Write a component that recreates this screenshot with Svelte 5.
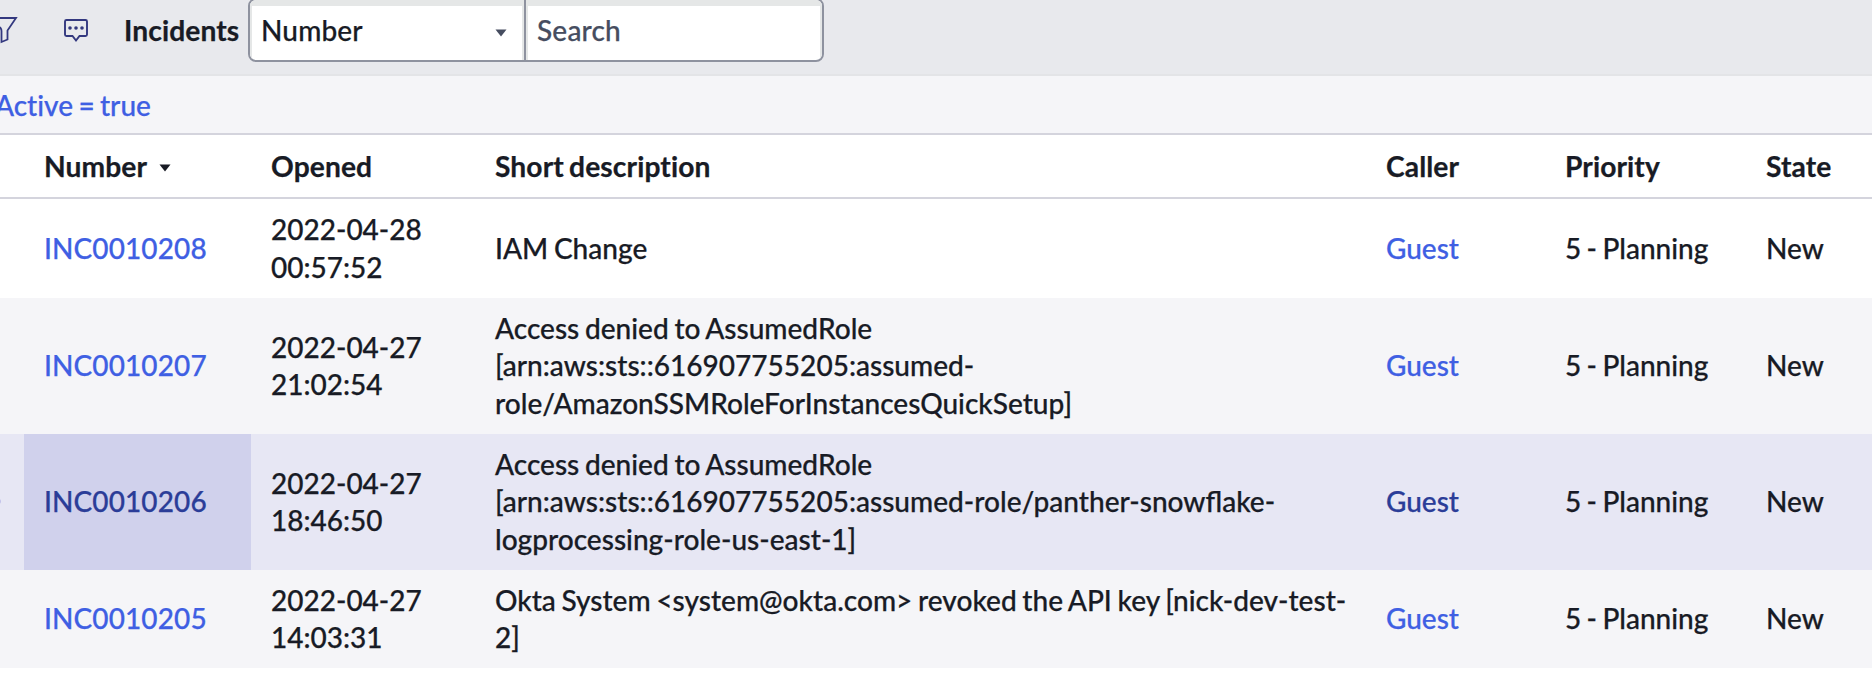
<script>
  const columns = ['Number', 'Opened', 'Short description', 'Caller', 'Priority', 'State'];
  const rows = [
    { number: 'INC0010208', date: '2022-04-28', time: '00:57:52', lines: ['IAM Change'], height: 99 },
    {
      number: 'INC0010207', date: '2022-04-27', time: '21:02:54', height: 136,
      lines: ['Access denied to AssumedRole', '[arn:aws:sts::616907755205:assumed-', 'role/AmazonSSMRoleForInstancesQuickSetup]']
    },
    {
      number: 'INC0010206', date: '2022-04-27', time: '18:46:50', height: 136, active: true,
      lines: ['Access denied to AssumedRole', '[arn:aws:sts::616907755205:assumed-role/panther-snowflake-', 'logprocessing-role-us-east-1]']
    },
    {
      number: 'INC0010205', date: '2022-04-27', time: '14:03:31', height: 98,
      lines: ['Okta System <system@okta.com> revoked the API key [nick-dev-test-', '2]']
    }
  ];
</script>

<div class="page">
  <header class="toolbar">
    <svg class="funnel" width="18" height="30" viewBox="0 0 18 30" fill="none" stroke="#33387f" stroke-width="1.800">
      <path d="M-11 3H16L7.500 15.500V24.500L1.500 27V16Q1.500 14 0 12" />
    </svg>
    <svg class="chat" width="26" height="26" viewBox="0 0 26 26">
      <path d="M3.500 2H22.500Q24 2 24 3.500V16.500Q24 18 22.500 18H16.500L13 22.500L9.500 18H3.500Q2 18 2 16.500V3.500Q2 2 3.500 2Z" fill="none" stroke="#33387f" stroke-width="1.900" />
      <g fill="#33387f"><circle cx="7" cy="10" r="1.800" /><circle cx="13" cy="10" r="1.800" /><circle cx="19" cy="10" r="1.800" /></g>
    </svg>
    <h1>Incidents</h1>
    <div class="search">
      <div class="select">
        <span>Number</span>
        <svg width="12" height="8" viewBox="0 0 12 8"><path d="M0.500 0.500H11.500L6 7.500Z" fill="#464d60" /></svg>
      </div>
      <div class="query">Search</div>
    </div>
  </header>
  <nav><a href="#active">Active = true</a></nav>
  <div class="row head">
    {#each columns as c, i}
      <div class="cell">
        {c}
        {#if i === 0}
          <svg width="12" height="8" viewBox="0 0 12 8"><path d="M0.500 0.500H11.500L6 7.500Z" fill="#181b25" /></svg>
        {/if}
      </div>
    {/each}
  </div>
  {#each rows as r, i}
    <div class="row" class:odd={i % 2 === 1} class:active={r.active} style:height="{r.height}px">
      <div class="cell num">{#if r.active}<i class="dot"></i>{/if}<a href="#{r.number}">{r.number}</a></div>
      <div class="cell"><p>{r.date}<br />{r.time}</p></div>
      <div class="cell"><p class="desc">{#each r.lines as line, n}{#if n}<br />{/if}{line}{/each}</p></div>
      <div class="cell"><a href="#guest">Guest</a></div>
      <div class="cell">5 - Planning</div>
      <div class="cell">New</div>
    </div>
  {/each}
</div>

<style>
  :global(body) { margin: 0; background: #fff; overflow: hidden; }
  .page {
    width: 1872px; height: 678px; overflow: hidden; background: #fff;
    font: 500 28px/37.14px Lato, sans-serif; color: #181b25; word-spacing: -1.700px;
    font-variant-ligatures: none; -webkit-text-stroke: 0.250px currentColor;
  }
  a { color: #3f5fe3; text-decoration: none; }
  .toolbar {
    box-sizing: border-box; height: 76px; display: flex; align-items: flex-start;
    background: #e8e9ed; border-bottom: 2px solid #e3e4e7;
  }
  .toolbar svg { flex: none; }
  .funnel { margin-top: 15px; }
  .chat { margin: 18px 0 0 45px; }
  h1 { width: 124px; margin: 12px 0 0 35px; font-size: 28.200px; line-height: 37px; font-weight: 700; letter-spacing: 0.100px; }
  .search {
    box-sizing: border-box; display: flex; width: 576px; height: 64px; margin-top: -2px;
    border: 2px solid #8e929f; border-radius: 8px; background: #fff; overflow: hidden;
  }
  .select, .query {
    box-sizing: border-box; display: flex; align-items: center; height: 60px; padding-top: 1px;
    box-shadow: inset 2px 0 #e5e7e7, inset -2px 0 #e5e7e7, inset 0 6px #e5e7e7;
  }
  .select { width: 276px; padding-left: 11px; padding-right: 17px; justify-content: space-between; border-right: 2px solid #8e929f; letter-spacing: 0.150px; }
  .select svg { margin-top: 4px; }
  .query { flex: 1; padding-left: 11px; color: #464d60; letter-spacing: 0.200px; }
  nav { box-sizing: border-box; height: 59px; padding-top: 11px; background: #f5f5f8; border-bottom: 2px solid #d4d4dd; }
  nav a { margin-left: -5px; }
  .row {
    display: grid; box-sizing: border-box;
    grid-template-columns: 227px 224px 891px 179px 201px 126px; padding-left: 24px; background: #fff;
  }
  .head { height: 64px; padding-top: 2px; border-bottom: 2px solid #d4d4dd; font-size: 28.200px; font-weight: 700; letter-spacing: 0.100px; }
  .head svg { margin-left: 12px; margin-top: 2px; }
  .cell { display: flex; align-items: center; padding-left: 20px; white-space: nowrap; }
  .num a { letter-spacing: 0.100px; }
  .odd { background: #f5f5f8; }
  .active { background: #e7e7f4; }
  .active a { color: #2b3d98; }
  .active .num { position: relative; background: #d0d1ec; }
  .dot { position: absolute; left: -28px; top: 65px; width: 5px; height: 5px; border-radius: 50%; background: #c3c3ea; }
  p { margin: 0; }
  .desc { font-size: 28.060px; word-spacing: -1.400px; font-variant-ligatures: normal; }
</style>
